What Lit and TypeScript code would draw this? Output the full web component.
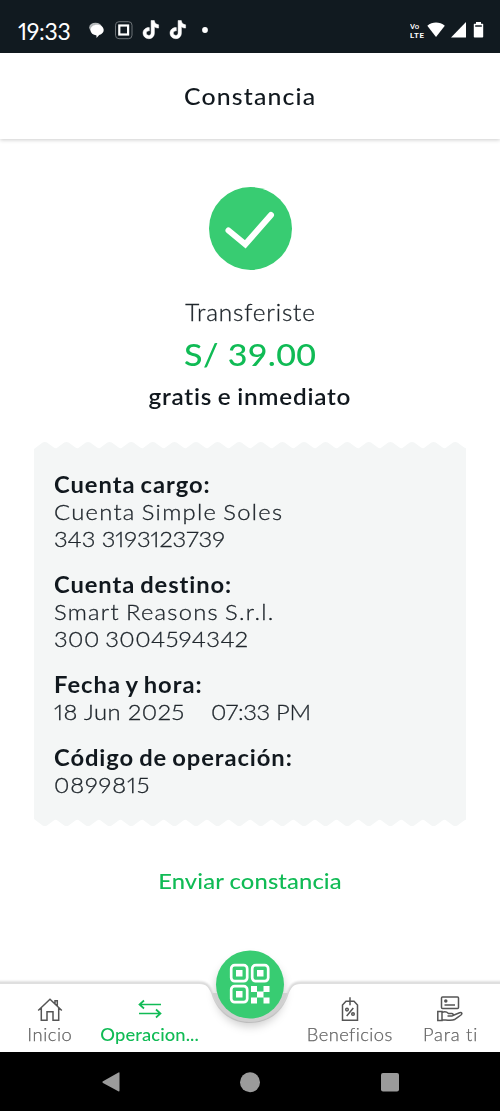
import { LitElement, html, svg, css } from "lit";
import { customElement } from "lit/decorators.js";

const TEETH = 20;
const PITCH = 21.6;

function paperEdge(): string {
  let d = "M0 8";
  for (let i = 0; i < TEETH; i++) {
    const x = i * PITCH;
    d += `L${x + 8.6} 1.6Q${x + 10.8} .2 ${x + 13} 1.6L${x + 19.8} 6.6Q${x + PITCH} 7.8 ${x + PITCH + (i < TEETH - 1 ? 1.2 : 0)} 7`;
  }
  return d + "V9H0Z";
}

@customElement("status-bar")
class StatusBar extends LitElement {
  static styles = css`
    :host { display: flex; align-items: center; height: 53px; background: #111a20; color: #fff;
      padding: 7px 16px 0 18px; box-sizing: border-box; flex: none; }
    .time { font: 400 23px/30px Lato, sans-serif; font-variant-numeric: proportional-nums; letter-spacing: -0.3px; width: 70px; padding-top: 1px; }
    .spring { flex: 1; }
    svg { display: block; }
  `;
  render() {
    const note = (x: number) => svg`<path transform="translate(${x} .500)" fill="#fff" d="M8.100 0h3.200c.3 2.500 1.800 4 4.300 4.300v3.300c-1.600 0-3-.5-4.200-1.300v6.100c0 3.500-2.500 5.800-5.600 5.800C2.500 18.200 0 15.700 0 12.600c0-3.200 2.700-5.800 6.300-5.500v3.300c-1.700-.3-3 .8-3 2.200 0 1.300 1 2.300 2.400 2.300 1.500 0 2.400-1 2.400-2.700z" stroke="#fff" stroke-width=".5"/>`;
    return html`
      <div class="time">19:33</div>
      <svg width="124" height="20" viewBox="0 0 124 20">
        <ellipse cx="7.500" cy="7.500" rx="6.300" ry="4.800" fill="#b4b8ba"/>
        <path fill="#fff" d="M9 4.800c3.800 0 6.700 2.200 6.700 5.300 0 2.400-1.700 4.200-4.500 5l-2.700 3v-2.700C5 15.100 2.500 13 2.500 10.100c0-3.100 2.700-5.300 6.500-5.300z"/>
        <rect x="27.500" y="1.700" width="16.500" height="17" rx="3.500" fill="none" stroke="#6d7377"/>
        <rect x="31.300" y="5.500" width="8.800" height="9" fill="none" stroke="#fff" stroke-width="2.200"/>
        ${note(55)}${note(82)}
        <circle cx="117" cy="10" r="2.900" fill="#fff"/>
      </svg>
      <div class="spring"></div>
      <svg width="74" height="20" viewBox="0 0 74 20" fill="#fff">
        <text x="0" y="8.600" font-family="Roboto, sans-serif" font-weight="500" font-size="7.800">Vo</text>
        <text x="0" y="17.900" font-family="Roboto, sans-serif" font-weight="700" font-size="7.800" textLength="14">LTE</text>
        <path d="M17.300 5.700c5-4.200 12.400-4.200 17.500 0L26 17z"/>
        <path d="M41 17.500 56 2v15.500z"/>
        <path fill-rule="evenodd" d="M66 2h5v1.800h1.700q.5 0 .5.500v12.400q0 .8-.8.800h-7.800q-.8 0-.8-.8V4.300q0-.5.500-.5H66zM65.200 5.200h6.600v1.600h-6.600z"/>
      </svg>`;
  }
}

@customElement("receipt-card")
class ReceiptCard extends LitElement {
  static styles = css`
    :host { display: block; margin: 0 34px; color: #20272d; }
    .edge { display: block; width: 432px; height: 8px; fill: #f4f6f6; }
    .flip { transform: scaleY(-1); }
    .body { background: #f4f6f6; height: 370px; box-sizing: border-box; padding: 22px 20px 0;
      display: flex; flex-direction: column; gap: 19px; font: 300 22px/27px Lato, sans-serif;
      font-variant-numeric: proportional-nums; white-space: pre; }
    section > div { height: 27px; }
    span { display: inline-block; transform: scaleX(1.08); transform-origin: 0 50%; -webkit-text-stroke: 0.3px currentColor; }
    .name { font-weight: 700; color: #11181e; -webkit-text-stroke: 0; }
    .s1 { letter-spacing: 0.88px; word-spacing: -1.500px; } .s2 { letter-spacing: 1.2px; word-spacing: -1.500px; }
    .s3 { letter-spacing: -0.05px; }
    .s4 { letter-spacing: 0.83px; word-spacing: -1.500px; } .s5 { letter-spacing: 1.17px; word-spacing: -1.500px; }
    .s6 { letter-spacing: 0.42px; word-spacing: -1.500px; }
    .s7 { letter-spacing: 0.93px; word-spacing: -1.500px; } .s9 { letter-spacing: 0.85px; word-spacing: -1.500px; }
    .s10 { letter-spacing: 0.8px; }
    .row { display: flex; }
    .date { width: 156.500px; letter-spacing: 0.45px; }
    .hour { letter-spacing: -0.3px; }
  `;
  render() {
    const edge = (c: string) => html`<svg class="edge ${c}" viewBox="0 0 432 8"><path d=${paperEdge()} /></svg>`;
    return html`${edge("")}
      <div class="body">
        <section><div><span class="name s1">Cuenta cargo:</span></div><div><span class="s2">Cuenta Simple Soles</span></div><div><span class="s3">343 3193123739</span></div></section>
        <section><div><span class="name s4">Cuenta destino:</span></div><div><span class="s5">Smart Reasons S.r.l.</span></div><div><span class="s6">300 3004594342</span></div></section>
        <section><div><span class="name s7">Fecha y hora:</span></div><div class="row"><span class="date">18 Jun 2025</span><span class="hour">07:33 PM</span></div></section>
        <section><div><span class="name s9">Código de operación:</span></div><div><span class="s10">0899815</span></div></section>
      </div>
      ${edge("flip")}`;
  }
}

@customElement("tab-bar")
class TabBar extends LitElement {
  static styles = css`
    :host { display: block; position: relative; height: 68px; flex: none; font: 300 17px/22px Lato, sans-serif; color: #666; }
    .shape { position: absolute; left: 0; top: -44px; }
    .tabs { position: relative; display: grid; grid-template-columns: repeat(5, 100px); height: 68px; }
    .tab { display: flex; flex-direction: column; align-items: center; padding-top: 11px; white-space: nowrap; }
    .tab svg { display: block; width: 30px; height: 30px; fill: none; stroke: #555; stroke-width: 1.500; margin-bottom: -1px; }
    .tab span { transform: scaleX(1.08); -webkit-text-stroke: 0.25px currentColor; }
    .active { color: #10bb55; font-weight: 500; }
    .active svg { stroke: #10bb55; stroke-width: 1.700; }
    .tab.active span { -webkit-text-stroke: 0; }
    .t1 { letter-spacing: 0.5px; } .t2 { letter-spacing: 0.1px; } .t3 { letter-spacing: 0.38px; } .t4 { letter-spacing: 0.7px; }
  `;
  render() {
    return html`
      <svg class="shape" width="500" height="112" viewBox="0 0 500 112">
        <defs>
          <filter id="soft" x="-10%" y="-20%" width="120%" height="140%"><feGaussianBlur stdDeviation="1.300"/></filter>
          <filter id="glow" x="-30%" y="-30%" width="160%" height="160%"><feGaussianBlur stdDeviation="4"/></filter>
        </defs>
        <path d="M-9 43H199C207 43 209 47 211.500 54C217 72 231 83 250 83S283 72 288.500 54C291 47 293 43 301 43H509V119H-9Z" fill="none" stroke="#000" stroke-opacity=".17" stroke-width="3" filter="url(#soft)"/>
        <path d="M0 44H199C207 44 209 48 211.500 54C217 72 231 83 250 83S283 72 288.500 54C291 48 293 44 301 44H500V112H0Z" fill="#fff"/>
        <circle cx="250" cy="52" r="35" fill="#000" fill-opacity=".18" filter="url(#glow)"/>
        <path d="M212.500 53C218 70 232 82 250 82S282 70 287.500 53Z" fill="#d0d0d0"/>
        <circle cx="250" cy="44.500" r="34" fill="#38cc72"/>
        <g fill="none" stroke="#fff" stroke-width="2.700">
          <rect x="231.200" y="25.200" width="16" height="16" rx="3.500"/>
          <rect x="252.200" y="25.200" width="16" height="16" rx="3.500"/>
          <rect x="231.200" y="46.200" width="16" height="16" rx="3.500"/>
        </g>
        <path fill="#fff" d="M236 30h6.500v6.500H236zM257 30h6.500v6.500H257zM236 51h6.500v6.500H236zM251 46h6v6h-6zM263.500 46h6v6h-6zM257 51.500h6.500v6H257zM251 57.500h6v6h-6zM263.500 57.500h6v6h-6z"/>
      </svg>
      <div class="tabs">
        <div class="tab"><svg viewBox="0 0 30 30"><path d="M3.200 15.500 15 4.200 26.800 15.500M6.300 13V25.200H12V16.800H18V25.200H23.700V13M22.300 11V5.800H20V8.800"/></svg><span class="t1">Inicio</span></div>
        <div class="tab active"><svg viewBox="0 0 30 30"><path d="M26 9.500H4.500M9 5.500 4.500 9.500 9 13.500M4 18.500H25.500M21 14.500 25.500 18.500 21 22.500"/></svg><span class="t2">Operacion...</span></div>
        <div class="tab"></div>
        <div class="tab"><svg viewBox="0 0 30 30"><path d="M7.500 25.300V10L11 6.200H19L22.500 10V25.300ZM15 2.300V10.200M18.300 13 11.700 21"/><circle cx="12" cy="14.600" r="1.300"/><circle cx="18" cy="19" r="1.300"/></svg><span class="t3">Beneficios</span></div>
        <div class="tab"><svg viewBox="0 0 30 30"><rect x="6.500" y="2" width="17" height="11.500" rx="1"/><path d="M9.500 10H20"/><circle cx="10.800" cy="6" r="1" fill="#555"/><path d="M2.800 16.500H7V25.500H2.800ZM7 17.500C10 16 12 17 13.500 18.500H17C18.500 18.500 18.500 21 17 21H12.500M18.500 20.200 24.500 17.700C27 17 27.500 18.700 26 20L19.500 24.500C17 26 12 25 7 24.700"/></svg><span class="t4">Para ti</span></div>
      </div>`;
  }
}

@customElement("app-root")
class AppRoot extends LitElement {
  static styles = css`
    :host { display: flex; flex-direction: column; width: 500px; height: 1111px; background: #fff;
      font-family: Lato, sans-serif; color: #11181e; overflow: hidden; }
    header { height: 86px; flex: none; display: flex; align-items: center; justify-content: center;
      font: 500 23px/30px Lato, sans-serif; box-shadow: 0 1px 4px rgba(0,0,0,.2); }
    main { flex: 1; display: flex; flex-direction: column; align-items: center; padding-top: 48px; }
    .ok { display: block; width: 83px; height: 83px; }
    span { display: inline-block; transform: scaleX(1.08); }
    .verb { font: 300 22.500px/30px Lato, sans-serif; margin-top: 28px; color: #20272d; -webkit-text-stroke: 0.3px currentColor; }
    .amount { font: 500 31.500px/40px Lato, sans-serif; color: #10bb55; margin-top: 6px; }
    .how { font: 600 22.500px/30px Lato, sans-serif; margin-top: 8px; }
    receipt-card { margin-top: 29px; }
    .send { font: 500 22px/30px Lato, sans-serif; color: #10bb55; margin-top: 39px; }
    .a { letter-spacing: 1.05px; } .b { letter-spacing: 0.76px; } .c { letter-spacing: 0.3px; }
    .d { letter-spacing: 0.7px; word-spacing: -1px; } .e { letter-spacing: 0.1px; }
    .system { height: 59px; flex: none; background: #000; }
    .system svg { display: block; }
  `;
  render() {
    return html`
      <status-bar></status-bar>
      <header><span class="a">Constancia</span></header>
      <main>
        <svg class="ok" viewBox="0 0 83 83"><circle cx="41.500" cy="41.500" r="41.500" fill="#38cc72"/><path d="M19.500 43.500 36.300 57.300 62 28" fill="none" stroke="#fff" stroke-width="6" stroke-linecap="round"/></svg>
        <div class="verb"><span class="b">Transferiste</span></div>
        <div class="amount"><span class="c">S/ 39.00</span></div>
        <div class="how"><span class="d">gratis e inmediato</span></div>
        <receipt-card></receipt-card>
        <div class="send"><span class="e">Enviar constancia</span></div>
      </main>
      <tab-bar></tab-bar>
      <div class="system"><svg width="500" height="59" viewBox="0 0 500 59" fill="#9b9b9b">
        <path d="M103 29.200 118.500 20.500Q119.500 20 119.500 21V38.500Q119.500 40 118.300 39.300L103 31Q101.500 30 103 29.200Z"/>
        <circle cx="250" cy="30.300" r="10"/><rect x="381" y="21" width="18" height="18.500" rx="2"/></svg></div>`;
  }
}
